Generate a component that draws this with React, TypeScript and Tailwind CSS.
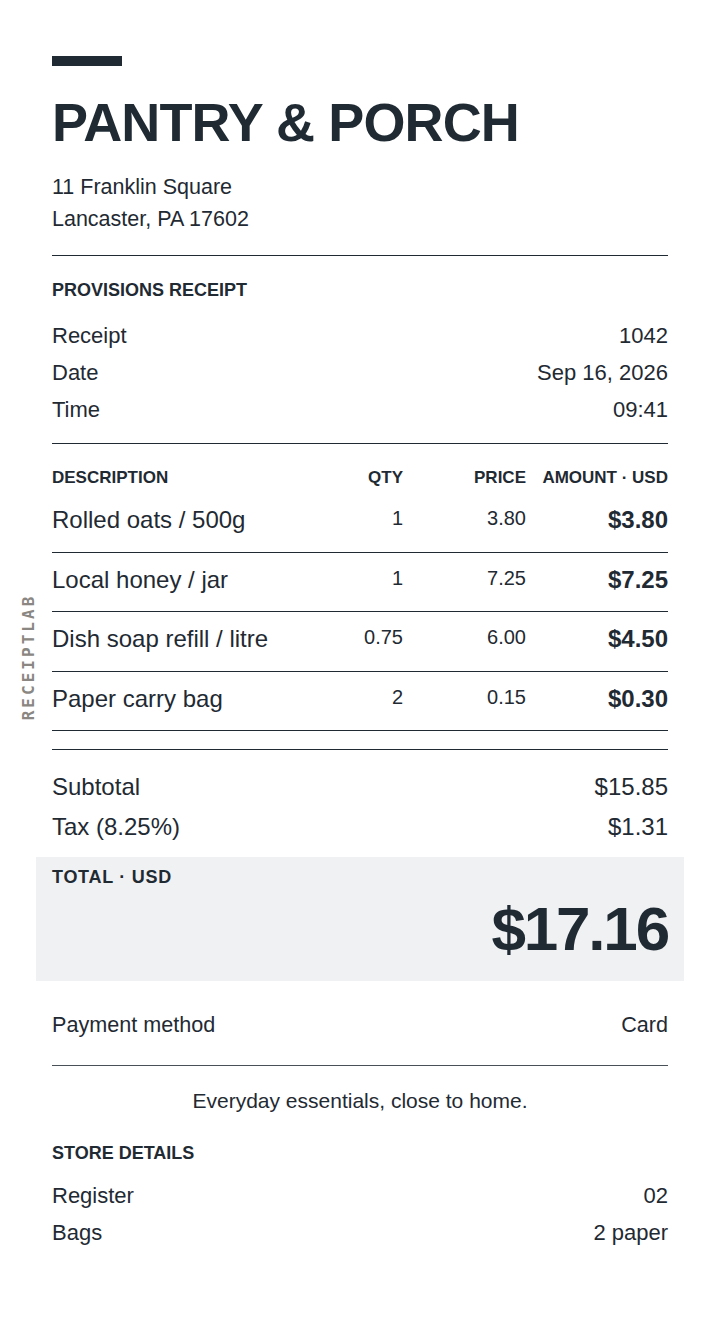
import React from "react";

const items = [
  { name: "Rolled oats / 500g", qty: "1", price: "3.80", amount: "$3.80" },
  { name: "Local honey / jar", qty: "1", price: "7.25", amount: "$7.25" },
  { name: "Dish soap refill / litre", qty: "0.75", price: "6.00", amount: "$4.50" },
  { name: "Paper carry bag", qty: "2", price: "0.15", amount: "$0.30" },
];

const Row = ({ label, value, className }: { label: string; value: string; className: string }) => (
  <div className={`flex items-center justify-between ${className}`}>
    <span>{label}</span>
    <span>{value}</span>
  </div>
);

export default function App() {
  return (
    <div className="relative min-h-[1318px] bg-white px-[52px] pt-[56px] font-['Liberation_Sans',Arial,sans-serif] text-[#1f2a33]">
      {/* side mark */}
      <div className="absolute left-[29px] top-[657px] -translate-x-1/2 -translate-y-1/2 -rotate-90 whitespace-nowrap font-['DejaVu_Sans_Mono',monospace] text-[16px] font-bold tracking-[0.19em] text-[#8a8782]">
        RECEIPTLAB
      </div>

      <div className="h-[10px] w-[70px] bg-[#1f2a33]" />
      <h1 className="mt-[26px] text-[54px] font-bold leading-[60px] tracking-[-0.016em]">PANTRY &amp; PORCH</h1>
      <div className="mt-[19px] text-[21.5px] leading-[32px]">
        <div>11 Franklin Square</div>
        <div>Lancaster, PA 17602</div>
      </div>

      <div className="mt-[20px] border-t border-[#1f2a33]" />

      <div className="pt-[24px] text-[18px] font-bold leading-[20px]">PROVISIONS RECEIPT</div>
      <div className="mt-[17px] text-[22px]">
        <Row label="Receipt" value="1042" className="h-[37px]" />
        <Row label="Date" value="Sep 16, 2026" className="h-[37px]" />
        <Row label="Time" value="09:41" className="h-[37px]" />
      </div>

      <div className="mt-[15px] border-t border-[#1f2a33]" />

      <div className="flex pt-[24px] pb-[5px] text-[17px] font-bold leading-[20px]">
        <div className="flex-1">DESCRIPTION</div>
        <div className="w-[80px] text-right">QTY</div>
        <div className="w-[123px] text-right">PRICE</div>
        <div className="w-[142px] text-right">AMOUNT · USD</div>
      </div>
      <div>
        {items.map((it) => (
          <div key={it.name} className="flex items-start border-b border-[#1f2a33] pt-[13px] pb-[17.5px]">
            <div className="flex-1 text-[24px] leading-[28px]">{it.name}</div>
            <div className="w-[80px] text-right text-[20px] leading-[24px]">{it.qty}</div>
            <div className="w-[123px] text-right text-[20px] leading-[24px]">{it.price}</div>
            <div className="w-[142px] text-right text-[24px] font-bold leading-[28px]">{it.amount}</div>
          </div>
        ))}
      </div>

      <div className="mt-[18px] border-t border-[#1f2a33]" />

      <div className="mt-[17px] text-[24px]">
        <Row label="Subtotal" value="$15.85" className="h-[40px]" />
        <Row label="Tax (8.25%)" value="$1.31" className="h-[40px]" />
      </div>

      <div className="-mx-4 mt-[10px] h-[124px] bg-[#f0f1f3] px-4 pt-[10px]">
        <div className="text-[18px] font-bold leading-[20px] tracking-[0.04em]">TOTAL · USD</div>
        <div className="mt-[6px] text-right text-[62px] font-bold leading-[72px] tracking-[-0.035em]">$17.16</div>
      </div>

      <Row label="Payment method" value="Card" className="mt-[26px] h-[36px] text-[21.6px]" />

      <div className="mt-[22px] border-t border-[#4a5058]" />

      <div className="mt-[21px] text-center text-[21px] leading-[28px]">Everyday essentials, close to home.</div>

      <div className="mt-[28px] text-[18px] font-bold leading-[20px]">STORE DETAILS</div>
      <div className="mt-[14px] text-[22px]">
        <Row label="Register" value="02" className="h-[37px]" />
        <Row label="Bags" value="2 paper" className="h-[37px]" />
      </div>
    </div>
  );
}
